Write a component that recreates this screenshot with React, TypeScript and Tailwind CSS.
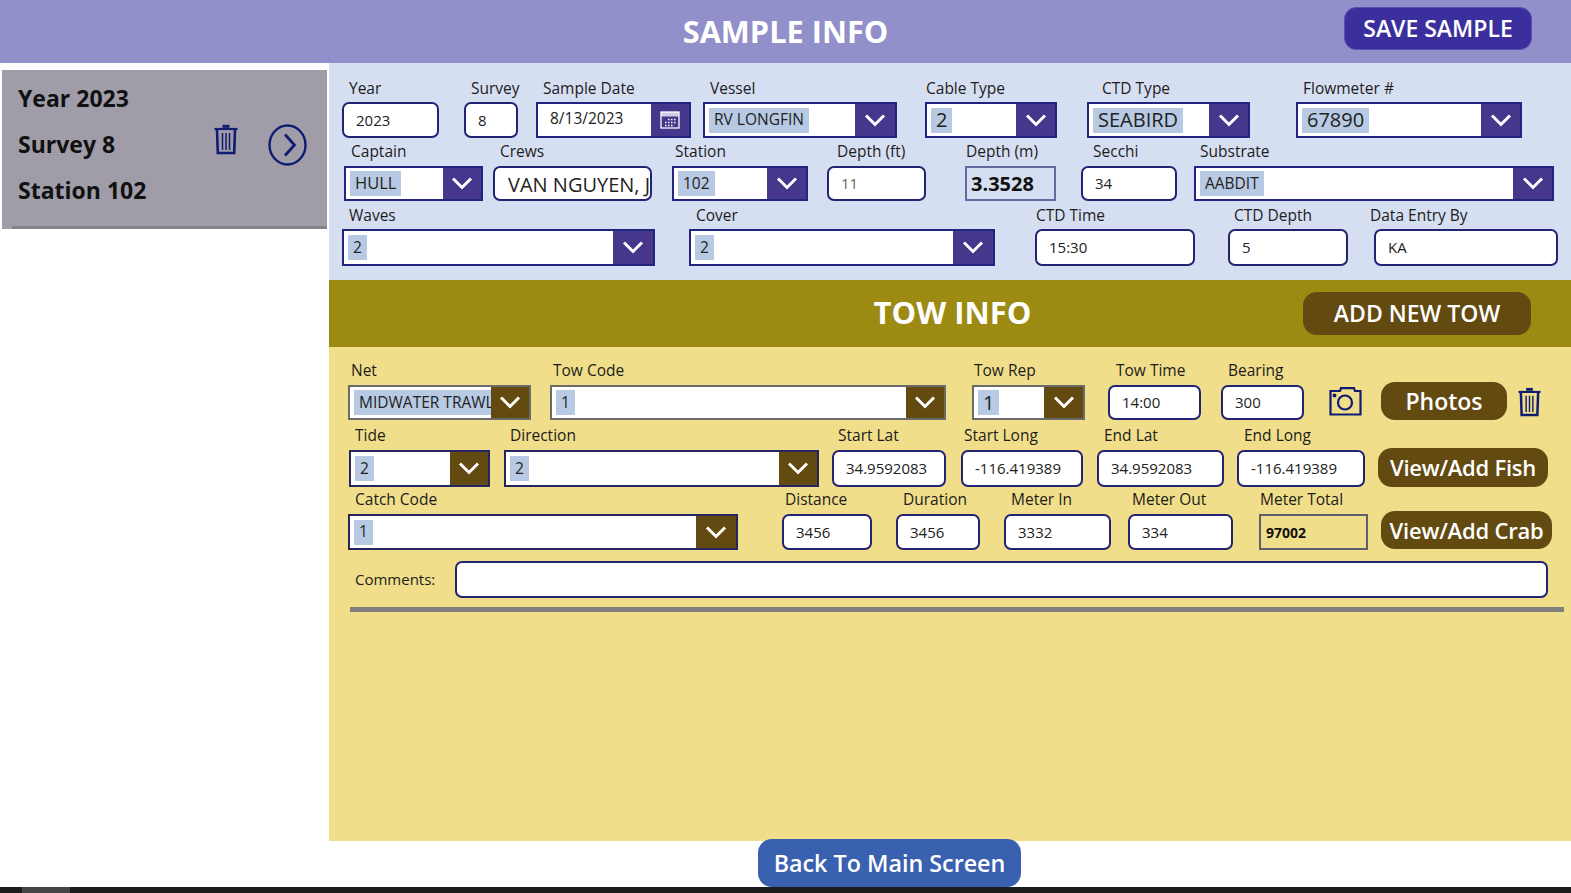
import React from "react";

const font = "font-['Open_Sans',sans-serif]";

function Chevron() {
  return (
    <svg viewBox="0 0 22 13" className="w-[22px] h-[13px]" fill="none" stroke="white" strokeWidth="3">
      <path d="M2 1.5 L11 10.5 L20 1.5" />
    </svg>
  );
}

function TrashIcon({ className }: { className: string }) {
  return (
    <svg viewBox="0 0 24 30" className={className} fill="none" stroke="#101c72" strokeWidth="2.6">
      <path d="M8.5 1.8h7" strokeWidth="3" />
      <path d="M0.5 4.5h23" strokeWidth="2.2" />
      <path d="M3 5 L3.8 28.5h16.4L21 5" />
      <path d="M8.5 8.5v17M12 8.5v17M15.5 8.5v17" strokeWidth="1.5" />
    </svg>
  );
}

function Field({
  label,
  className,
  labelClass,
  leading = "leading-[22px]",
  children,
}: {
  label: string;
  className: string;
  labelClass: string;
  leading?: string;
  children: React.ReactNode;
}) {
  return (
    <div className={className}>
      <div className={`h-[25px] text-[15.5px] whitespace-nowrap text-[#1c1c1c] ${leading} ${labelClass}`}>{label}</div>
      {children}
    </div>
  );
}

function TextBox({
  value,
  h,
  pad = "pl-3",
  size = "text-[15px]",
  color = "text-[#222]",
}: {
  value?: string;
  h: string;
  pad?: string;
  size?: string;
  color?: string;
}) {
  return (
    <div className={`flex items-center bg-white border-2 border-[#232374] rounded-[7px] overflow-hidden whitespace-nowrap ${h} ${pad} ${size} ${color}`}>
      {value}
    </div>
  );
}

function Drop({
  value,
  h,
  tow = false,
  grey = false,
  size = "text-[15.5px]",
  btn = "w-[38px]",
}: {
  value: string;
  h: string;
  tow?: boolean;
  grey?: boolean;
  size?: string;
  btn?: string;
}) {
  return (
    <div className={`flex bg-white border-2 overflow-hidden ${h} ${grey ? "border-[#6b6b6b]" : tow ? "border-[#25255f]" : "border-[#232380]"}`}>
      <div className="flex-1 min-w-0 flex items-center pl-[4px] overflow-hidden">
        <span className={`bg-[#b8cae3] h-[25px] px-[5px] flex items-center whitespace-nowrap text-[#222] ${size}`}>{value}</span>
      </div>
      <div className={`flex items-center justify-center shrink-0 ${btn} ${tow ? "bg-[#634a10]" : "bg-[#46368c]"}`}>
        <Chevron />
      </div>
    </div>
  );
}

function BrownButton({ children, className }: { children: React.ReactNode; className: string }) {
  return (
    <button className={`bg-[#634a10] text-white font-semibold rounded-[14px] whitespace-nowrap flex items-center justify-center ${className}`}>
      {children}
    </button>
  );
}

export default function App() {
  return (
    <div className={`w-[1571px] h-[893px] overflow-hidden flex flex-col bg-white ${font}`}>
      {/* header */}
      <div className="h-[63px] shrink-0 bg-[#9290ca] flex items-center relative">
        <h1 className="w-full text-center text-white font-bold text-[30.75px]">SAMPLE INFO</h1>
        <button className="absolute left-[1344px] top-[7px] w-[188px] h-[43px] bg-[#3b2f9e] border border-[#5a50b0] rounded-[12px] text-white font-semibold text-[23px]">
          SAVE SAMPLE
        </button>
      </div>

      <div className="flex flex-1 min-h-0">
        {/* left list */}
        <div className="w-[329px] shrink-0 pt-[7px] pl-[2px]">
          <div className="w-[325px] h-[159px] bg-[#a09da9] relative pl-[16px] pt-[12px]">
            <div className="flex flex-col gap-[14px] font-bold text-[23px] leading-[32px] text-[#111]">
              <div>Year 2023</div>
              <div>Survey 8</div>
              <div>Station 102</div>
            </div>
            <TrashIcon className="absolute left-[212px] top-[54px] w-[24px] h-[31px]" />
            <svg viewBox="0 0 39 42" className="absolute left-[266px] top-[54px] w-[39px] h-[42px]" fill="none" stroke="#101c72" strokeWidth="2.4">
              <ellipse cx="19.5" cy="21" rx="18" ry="19.5" />
              <path d="M17 10.5 L26.5 21 L17 31.5" strokeWidth="2.8" />
            </svg>
            <div className="absolute left-[10px] right-0 bottom-0 h-[3px] bg-[#85828a]"></div>
          </div>
        </div>

        {/* right side */}
        <div className="flex-1 flex flex-col min-w-0">
          {/* sample form */}
          <div className="h-[217px] shrink-0 bg-[#d6dff2] pt-[14px]">
            <div className="flex">
              <Field label="Year" className="ml-[13px] w-[97px]" labelClass="pl-[7px]"><TextBox value="2023" h="h-[36px]" /></Field>
              <Field label="Survey" className="ml-[25px] w-[54px]" labelClass="pl-[7px]"><TextBox value="8" h="h-[36px]" /></Field>
              <Field label="Sample Date" className="ml-[18px] w-[155px]" labelClass="pl-[7px]">
                <div className="flex h-[36px] bg-white border-2 border-[#232380]">
                  <div className="flex-1 pl-3 pt-[3px] text-[15.5px] text-[#222]">8/13/2023</div>
                  <div className="w-[38px] bg-[#46368c] flex items-center justify-center">
                    <svg viewBox="0 0 20 18" className="w-[20px] h-[18px]" fill="none" stroke="white" strokeWidth="1.3">
                      <rect x="1" y="1" width="18" height="16" />
                      <rect x="1" y="1" width="18" height="4.5" fill="white" fillOpacity="0.75" strokeWidth="0" />
                      <path d="M8 8.5h1.5M11 8.5h1.5M14 8.5h1.5M5 11.5h1.5M8 11.5h1.5M11 11.5h1.5M14 11.5h1.5M5 14.5h1.5M8 14.5h1.5M11 14.5h1.5" />
                    </svg>
                  </div>
                </div>
              </Field>
              <Field label="Vessel" className="ml-[12px] w-[194px]" labelClass="pl-[7px]"><Drop value="RV LONGFIN" h="h-[36px]" btn="w-[40px]" /></Field>
              <Field label="Cable Type" className="ml-[28px] w-[132px]" labelClass="pl-[1px]"><Drop value="2" h="h-[36px]" size="text-[20px]" btn="w-[39px]" /></Field>
              <Field label="CTD Type" className="ml-[30px] w-[163px]" labelClass="pl-[15px]"><Drop value="SEABIRD" h="h-[36px]" size="text-[20px]" btn="w-[39px]" /></Field>
              <Field label="Flowmeter #" className="ml-[46px] w-[226px]" labelClass="pl-[7px]"><Drop value="67890" h="h-[36px]" size="text-[20px]" btn="w-[39px]" /></Field>
            </div>
            <div className="flex mt-[3px]">
              <Field label="Captain" className="ml-[15px] w-[139px]" labelClass="pl-[7px]" leading="leading-[20px]"><Drop value="HULL" h="h-[35px]" size="text-[16.5px]" btn="w-[38px]" /></Field>
              <Field label="Crews" className="ml-[10px] w-[159px]" labelClass="pl-[7px]" leading="leading-[20px]"><TextBox value="VAN NGUYEN, J" h="h-[35px]" pad="pl-[13px] pt-[3px]" size="text-[20px]" /></Field>
              <Field label="Station" className="ml-[20px] w-[136px]" labelClass="pl-[3px]" leading="leading-[20px]"><Drop value="102" h="h-[35px]" btn="w-[39px]" /></Field>
              <Field label="Depth (ft)" className="ml-[19px] w-[99px]" labelClass="pl-[10px]" leading="leading-[20px]"><TextBox value="11" h="h-[35px]" color="text-[#666a55]" /></Field>
              <Field label="Depth (m)" className="ml-[39px] w-[91px]" labelClass="pl-[1px]" leading="leading-[20px]">
                <div className="h-[35px] border-2 border-[#1b1b6b]/60 bg-[#d6dff2] flex items-center pl-[4px] pt-[1px] font-bold text-[20px] text-[#111]">3.3528</div>
              </Field>
              <Field label="Secchi" className="ml-[25px] w-[96px]" labelClass="pl-[12px]" leading="leading-[20px]"><TextBox value="34" h="h-[35px]" /></Field>
              <Field label="Substrate" className="ml-[17px] w-[360px]" labelClass="pl-[6px]" leading="leading-[20px]"><Drop value="AABDIT" h="h-[35px]" btn="w-[39px]" /></Field>
            </div>
            <div className="flex mt-[3px]">
              <Field label="Waves" className="ml-[13px] w-[313px]" labelClass="pl-[7px]"><Drop value="2" h="h-[37px]" btn="w-[40px]" /></Field>
              <Field label="Cover" className="ml-[34px] w-[306px]" labelClass="pl-[7px]"><Drop value="2" h="h-[37px]" btn="w-[40px]" /></Field>
              <Field label="CTD Time" className="ml-[40px] w-[160px]" labelClass="pl-[1px]"><TextBox value="15:30" h="h-[37px]" /></Field>
              <Field label="CTD Depth" className="ml-[33px] w-[120px]" labelClass="pl-[6px]"><TextBox value="5" h="h-[37px]" /></Field>
              <Field label="Data Entry By" className="ml-[26px] w-[184px]" labelClass="-ml-[4px]"><TextBox value="KA" h="h-[37px]" /></Field>
            </div>
          </div>

          {/* tow header */}
          <div className="h-[67px] shrink-0 bg-[#9c8a12] flex items-center relative">
            <h2 className="w-full text-center text-white font-bold text-[31px] pl-[5px] pb-[2px]">TOW INFO</h2>
            <BrownButton className="absolute left-[974px] top-[12px] w-[228px] h-[43px] text-[23px]">ADD NEW TOW</BrownButton>
          </div>

          {/* tow form */}
          <div className="flex-1 min-h-0 bg-[#f1de8a] pt-[13px]">
            <div className="flex">
              <Field label="Net" className="ml-[19px] w-[183px]" labelClass="pl-[3px]" leading="leading-[20px]"><Drop value="MIDWATER TRAWL" h="h-[35px]" tow grey btn="w-[38px]" /></Field>
              <Field label="Tow Code" className="ml-[19px] w-[396px]" labelClass="pl-[3px]" leading="leading-[20px]"><Drop value="1" h="h-[35px]" tow grey btn="w-[38px]" /></Field>
              <Field label="Tow Rep" className="ml-[26px] w-[113px]" labelClass="pl-[2px]" leading="leading-[20px]"><Drop value="1" h="h-[35px]" tow grey size="text-[20px]" btn="w-[39px]" /></Field>
              <Field label="Tow Time" className="ml-[23px] w-[93px]" labelClass="pl-[8px]" leading="leading-[20px]"><TextBox value="14:00" h="h-[35px]" /></Field>
              <Field label="Bearing" className="ml-[20px] w-[83px]" labelClass="pl-[7px]" leading="leading-[20px]"><TextBox value="300" h="h-[35px]" /></Field>
              <svg viewBox="0 0 33 29" className="ml-[25px] mt-[27px] w-[33px] h-[29px]" fill="none" stroke="#101c72" strokeWidth="2.2">
                <path d="M1.5 4h9.500l1-2.800h13l1 2.800h5.500v23.500h-30z" />
                <circle cx="16" cy="15.500" r="7" />
                <circle cx="5.500" cy="8.500" r="0.9" fill="#101c72" />
              </svg>
              <BrownButton className="ml-[19px] mt-[22px] w-[126px] h-[38px] text-[23px]">Photos</BrownButton>
              <TrashIcon className="ml-[11px] mt-[27px] w-[23px] h-[30px]" />
            </div>
            <div className="flex mt-[5px]">
              <Field label="Tide" className="ml-[20px] w-[141px]" labelClass="pl-[6px]" leading="leading-[20px]"><Drop value="2" h="h-[37px]" tow btn="w-[38px]" /></Field>
              <Field label="Direction" className="ml-[14px] w-[315px]" labelClass="pl-[6px]" leading="leading-[20px]"><Drop value="2" h="h-[37px]" tow btn="w-[38px]" /></Field>
              <Field label="Start Lat" className="ml-[13px] w-[114px]" labelClass="pl-[6px]" leading="leading-[20px]"><TextBox value="34.9592083" h="h-[37px]" /></Field>
              <Field label="Start Long" className="ml-[15px] w-[122px]" labelClass="pl-[3px]" leading="leading-[20px]"><TextBox value="-116.419389" h="h-[37px]" /></Field>
              <Field label="End Lat" className="ml-[14px] w-[127px]" labelClass="pl-[7px]" leading="leading-[20px]"><TextBox value="34.9592083" h="h-[37px]" /></Field>
              <Field label="End Long" className="ml-[13px] w-[128px]" labelClass="pl-[7px]" leading="leading-[20px]"><TextBox value="-116.419389" h="h-[37px]" /></Field>
              <BrownButton className="ml-[13px] mt-[23px] w-[170px] h-[39px] text-[22px] tracking-[-0.25px]">View/Add Fish</BrownButton>
            </div>
            <div className="flex mt-[2px]">
              <Field label="Catch Code" className="ml-[19px] w-[390px]" labelClass="pl-[7px]" leading="leading-[20px]"><Drop value="1" h="h-[36px]" tow btn="w-[40px]" /></Field>
              <Field label="Distance" className="ml-[44px] w-[90px]" labelClass="pl-[3px]" leading="leading-[20px]"><TextBox value="3456" h="h-[36px]" /></Field>
              <Field label="Duration" className="ml-[24px] w-[84px]" labelClass="pl-[7px]" leading="leading-[20px]"><TextBox value="3456" h="h-[36px]" /></Field>
              <Field label="Meter In" className="ml-[24px] w-[107px]" labelClass="pl-[7px]" leading="leading-[20px]"><TextBox value="3332" h="h-[36px]" /></Field>
              <Field label="Meter Out" className="ml-[17px] w-[105px]" labelClass="pl-[4px]" leading="leading-[20px]"><TextBox value="334" h="h-[36px]" /></Field>
              <Field label="Meter Total" className="ml-[26px] w-[109px]" labelClass="pl-[1px]" leading="leading-[20px]">
                <div className="h-[36px] border-2 border-[#5f5f6a] flex items-center pl-[5px] font-bold text-[14px] text-[#111]">97002</div>
              </Field>
              <BrownButton className="ml-[13px] mt-[22px] w-[171px] h-[38px] text-[22px] tracking-[-0.2px]">View/Add Crab</BrownButton>
            </div>
            <div className="flex items-center mt-[11px]">
              <span className="ml-[26px] w-[100px] text-[15px] text-[#1c1c1c]">Comments:</span>
              <div className="w-[1093px] h-[37px] bg-white border-2 border-[#232374] rounded-[7px]"></div>
            </div>
            <div className="ml-[21px] mt-[9px] w-[1214px] h-[5px] bg-[#808080]"></div>
          </div>
        </div>
      </div>

      {/* footer */}
      <div className="h-[46px] shrink-0 flex justify-start">
        <button className="ml-[758px] -mt-[2px] pt-[1px] w-[263px] h-[48px] shrink-0 bg-[#3a60b0] rounded-[14px] text-white font-semibold text-[23.3px] relative">
          Back To Main Screen
        </button>
      </div>
      <div className="h-[6px] shrink-0 bg-[#1c1c1c] pl-[22px]">
        <div className="w-[48px] h-full bg-[#444444]"></div>
      </div>
    </div>
  );
}
